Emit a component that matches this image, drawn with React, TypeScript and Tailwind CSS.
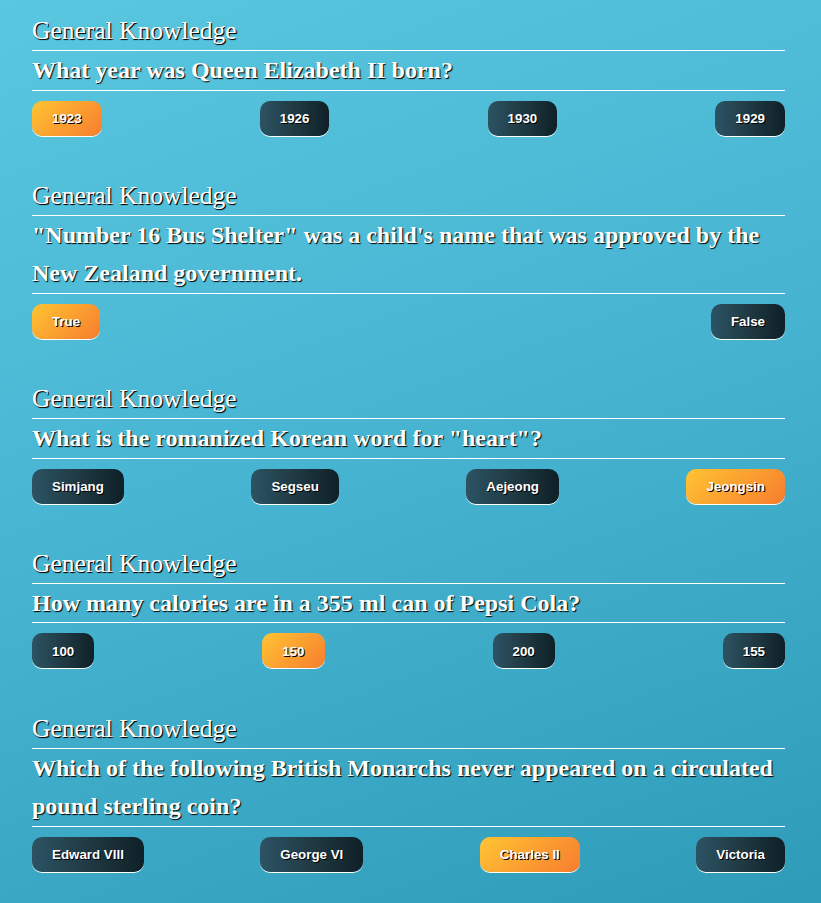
import React from "react";

type Q = { question: string; answers: string[]; selected: number };

const data: Q[] = [
  { question: "What year was Queen Elizabeth II born?", answers: ["1923", "1926", "1930", "1929"], selected: 0 },
  {
    question: '"Number 16 Bus Shelter" was a child\'s name that was approved by the New Zealand government.',
    answers: ["True", "False"],
    selected: 0,
  },
  { question: 'What is the romanized Korean word for "heart"?', answers: ["Simjang", "Segseu", "Aejeong", "Jeongsin"], selected: 3 },
  { question: "How many calories are in a 355 ml can of Pepsi Cola?", answers: ["100", "150", "200", "155"], selected: 1 },
  {
    question: "Which of the following British Monarchs never appeared on a circulated pound sterling coin?",
    answers: ["Edward VIII", "George VI", "Charles II", "Victoria"],
    selected: 2,
  },
];

export default function App() {
  return (
    <div
      className="min-h-screen w-full bg-[linear-gradient(160deg,#5ac7e0_0%,#46b3d1_50%,#2e9cb9_100%)] pl-[32px] pr-[36px] pt-[12px] pb-[31px] flex flex-col gap-[41.25px]"
    >
      {data.map((q, i) => (
        <div key={i} className="flex flex-col">
          <h2
            className="text-white text-[25.5px] leading-[38px] font-normal border-b border-white [text-shadow:1px_1px_1px_#000,1px_1px_0_rgba(0,0,0,0.6),0.4px_0_0_#fff]"
            style={{ fontFamily: '"Liberation Serif", "Times New Roman", serif' }}
          >
            General Knowledge
          </h2>
          <p
            className="text-white text-[24px] leading-[38.5px] font-bold border-b border-white [text-shadow:1px_1px_1px_#000]"
            style={{ fontFamily: '"Liberation Serif", "Times New Roman", serif' }}
          >
            {q.question}
          </p>
          <div className="flex justify-between mt-[10px]">
            {q.answers.map((a, j) => (
              <button
                key={j}
                className={
                  "h-[35px] px-[20px] pt-[2px] rounded-[10px] text-white text-[13.33px] font-bold shadow-[0_1px_0_#ffffff] [text-shadow:1px_1px_0_#000] " +
                  (j === q.selected
                    ? "bg-[linear-gradient(135deg,#ffc433,#f77d2e)]"
                    : "bg-[linear-gradient(90deg,#2c5364,#203a43,#0f2027)]")
                }
                style={{ fontFamily: '"Liberation Sans", Arial, sans-serif' }}
              >
                {a}
              </button>
            ))}
          </div>
        </div>
      ))}
    </div>
  );
}
